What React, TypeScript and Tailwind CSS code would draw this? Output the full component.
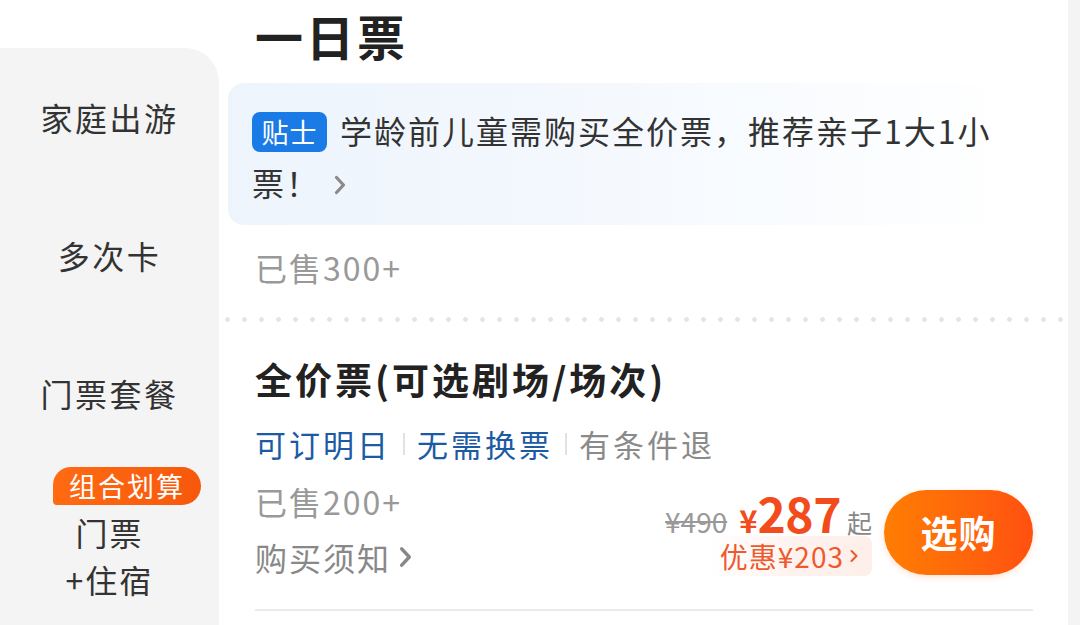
import { ChevronRight } from 'lucide-react'

const font = { fontFamily: '"Noto Sans CJK SC", "Noto Sans", sans-serif' }

const SideItem = ({ label }: { label: string }) => (
    <div className="h-[138px] flex items-center justify-center text-[32px] tracking-[2.5px] text-[#333]">{label}</div>
)

const Chevron = ({ className }: { className?: string }) => (
    <svg viewBox="0 0 12 20" className={className} fill="none">
        <path d="M2.5 2.5 L9.5 10 L2.5 17.5" stroke="currentColor" strokeWidth="3.2" strokeLinecap="round" strokeLinejoin="round" />
    </svg>
)

const App = () => {
    return (
        <div className="w-[1080px] h-[625px] flex overflow-hidden bg-white" style={font}>
            {/* left category rail */}
            <div className="w-[219px] flex flex-col pt-[48px]">
                <div className="flex-1 bg-[#f4f4f4] rounded-tr-[34px] flex flex-col">
                    <SideItem label="家庭出游" />
                    <SideItem label="多次卡" />
                    <SideItem label="门票套餐" />
                    <div className="flex flex-col items-center mt-[5px]">
                        <div className="self-start ml-[53px] h-[38px] w-[148px] flex items-center justify-center bg-gradient-to-r from-[#ff6a12] to-[#f7580c] text-white text-[27px] tracking-[2px] rounded-tl-[18px] rounded-tr-[19px] rounded-br-[19px] rounded-bl-[4px]">
                            组合划算
                        </div>
                        <div className="text-[32px] tracking-[2px] text-[#333] leading-[47px] mt-[4px]">门票</div>
                        <div className="text-[32px] tracking-[2px] text-[#333] leading-[47px]">+住宿</div>
                    </div>
                </div>
            </div>

            {/* ticket list */}
            <div className="flex-1 flex flex-col">
                <div className="pl-[36px] pt-[7px] text-[48px] leading-[56px] font-bold tracking-[3px] text-[#222]">一日票</div>

                <div className="ml-[9px] mt-[20px] w-[790px] rounded-[16px] bg-gradient-to-r from-[#edf4fc] via-[#f5f9fe] to-white pl-[24px] pr-[14px] pt-[21px] pb-[17px] text-[32px] leading-[52px] tracking-[2px] text-[#333]">
                    <span className="inline-flex items-center justify-center align-middle -mt-[6px] h-[40px] w-[75px] rounded-[8px] bg-[#1a7ae6] text-white text-[27px] tracking-[1px] mr-[13px]">贴士</span>
                    学龄前儿童需购买全价票，推荐亲子1大1小票！
                    <Chevron className="inline-block w-[12px] h-[20px] ml-[14px] -mt-[4px] align-middle text-[#8a8a8a]" />
                </div>

                <div className="pl-[36px] mt-[14px] text-[32px] leading-[56px] tracking-[2px] text-[#999]">已售300+</div>

                <div className="mt-[22px] h-[5px] bg-[radial-gradient(circle,#e4e4e4_2px,transparent_2.6px)] bg-[length:17px_5px]" />

                <div className="pl-[36px] pr-[35px]">
                    <div className="mt-[32px] text-[37px] leading-[50px] font-bold tracking-[3px] text-[#222]">全价票(可选剧场/场次)</div>

                    <div className="mt-[16px] flex items-center text-[31px] leading-[48px] tracking-[3px]">
                        <span className="text-[#1d5aa5]">可订明日</span>
                        <span className="mx-[12px] w-[2px] h-[22px] bg-[#e2e2e2]" />
                        <span className="text-[#1d5aa5]">无需换票</span>
                        <span className="mx-[12px] w-[2px] h-[22px] bg-[#e2e2e2]" />
                        <span className="text-[#8a8a8a]">有条件退</span>
                    </div>

                    <div className="mt-[5px] flex justify-between">
                        <div className="flex flex-col text-[32px] leading-[56px] tracking-[2px] text-[#999]">
                            <span>已售200+</span>
                            <span className="flex items-center text-[#888]">
                                购买须知
                                <Chevron className="w-[13px] h-[22px] ml-[8px] text-[#888]" />
                            </span>
                        </div>

                        <div className="flex items-start gap-[12px] mt-[17px]">
                            <div className="flex flex-col items-end">
                                <div className="flex items-baseline h-[44px] leading-[44px]">
                                    <span className="text-[28px] text-[#999] line-through decoration-[2px] mr-[12px]">¥490</span>
                                    <span className="text-[31px] font-bold text-[#f24c1c]">¥</span>
                                    <span className="text-[48px] font-bold text-[#f24c1c] tracking-[-0.5px]">287</span>
                                    <span className="text-[25px] text-[#888] ml-[6px]">起</span>
                                </div>
                                <div className="mt-[2px] h-[40px] flex items-center rounded-[8px] bg-gradient-to-r from-white via-[#fff3ef] to-[#fdeee9] pl-[12px] pr-[8px] text-[28px] tracking-[1px] leading-[40px] text-[#ee5a2e]">
                                    优惠¥203
                                    <ChevronRight className="w-[20px] h-[20px]" strokeWidth={2.5} />
                                </div>
                            </div>
                            <button className="w-[149px] h-[85px] rounded-full bg-gradient-to-r from-[#ff7d02] to-[#ff5010] text-white text-[37px] font-bold tracking-[1px] shadow-[0_2px_6px_rgba(255,100,20,0.2)]">
                                选购
                            </button>
                        </div>
                    </div>

                    <div className="mt-[24px] h-[2px] bg-[#ebebeb]" />
                </div>
            </div>

            <div className="w-[12px] bg-[#f4f4f4]" />
        </div>
    )
}

export default App
